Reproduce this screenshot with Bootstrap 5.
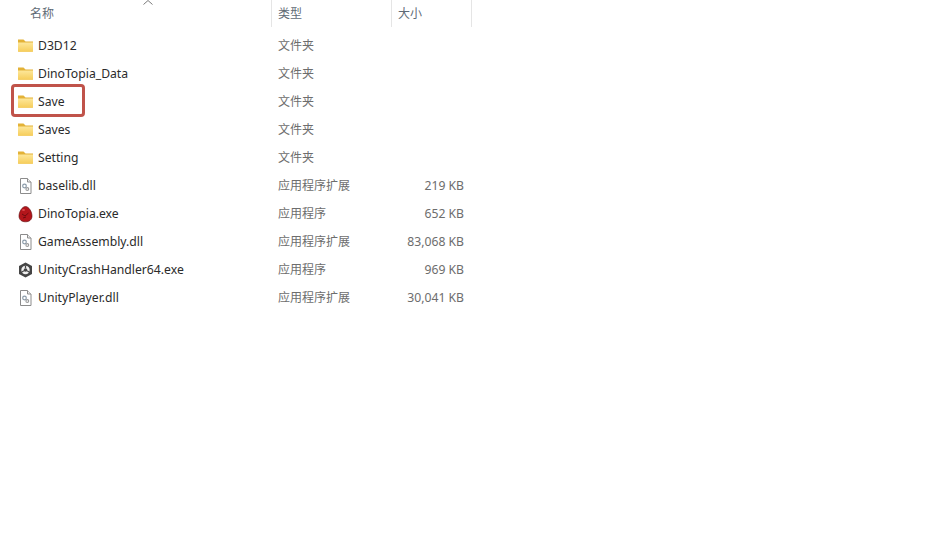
<!DOCTYPE html>
<html lang="zh">
<head>
<meta charset="utf-8">
<title>Files</title>
<link href="https://cdn.jsdelivr.net/npm/bootstrap@5.3.0/dist/css/bootstrap.min.css" rel="stylesheet">
<style>
body{background:#fff;font-family:"Noto Sans","Noto Sans CJK SC",sans-serif;font-size:12.2px;color:#2b2b2b;overflow:hidden}
.fx-list{width:472px;position:relative}
.fx-head{height:27px;color:#5f6b76;position:relative;font-size:12px}
.fx-head>div{padding-top:5px;height:27px}
.fx-c1{width:271px;flex:none}
.fx-c2{width:120px;flex:none}
.fx-c3{width:81px;flex:none}
.fx-head .fx-c1{padding-left:30px}
.fx-head .fx-c2,.fx-head .fx-c3{padding-left:6px;border-left:1px solid #e5e5e5}
.fx-head .fx-c3{border-right:1px solid #e5e5e5}
.fx-caret{position:absolute;left:143px;top:0}
.fx-body{padding-top:5px}
.fx-row{height:28px;line-height:28px}
.fx-name{padding-left:17px;gap:4px}
.fx-name svg{flex:none;width:17px;height:18px}
.fx-type{padding-left:7px;color:#6d6d6d;font-size:12px}
.fx-size{padding-right:8px;text-align:right;color:#6d6d6d}
.fx-mark{position:absolute;left:11px;top:84px;width:74px;height:33px;border:3px solid #c0534a;border-radius:4px}
</style>
</head>
<body>
<svg width="0" height="0" class="d-block">
<defs>
<linearGradient id="fg" x1="0" y1="0" x2="0" y2="1"><stop offset="0" stop-color="#fde79a"/><stop offset="1" stop-color="#f6cd5a"/></linearGradient>
<symbol id="i-folder" viewBox="0 0 17 18"><path d="M1 2.500h5.500l2 2H16v10H1z" fill="#e3b237"/><path d="M1 5.500h15V14a.7.7 0 0 1-.7.7H1.700A.7.7 0 0 1 1 14z" fill="url(#fg)"/></symbol>
<symbol id="i-dll" viewBox="0 0 17 18"><path d="M3.500 1.500h7l3.500 3.500V16.500H3.500z" fill="#fff" stroke="#8c8c8c"/><path d="M10.500 1.500v3.500H14" fill="#eee" stroke="#8c8c8c"/><circle cx="7.500" cy="9" r="1.800" fill="none" stroke="#8a9aa8" stroke-width="1.200"/><circle cx="10.300" cy="12" r="1.400" fill="none" stroke="#9a9a9a" stroke-width="1.100"/></symbol>
<symbol id="i-egg" viewBox="0 0 17 18"><path d="M8.500 1.500C12 1.500 15 7 15 11s-3 5.800-6.500 5.800S2 15 2 11 5 1.500 8.500 1.500z" fill="#b3151b" stroke="#5a0a0d" stroke-width=".6"/><path d="M5 9l3 2 3.500-3M6 13l3-1" fill="none" stroke="#6e0b0f" stroke-width="1"/><ellipse cx="6.500" cy="5" rx="1.500" ry="1" fill="#dc4a4d"/></symbol>
<symbol id="i-unity" viewBox="0 0 17 18"><path d="M8.500 1.500 15 5v8l-6.500 3.500L2 13V5z" fill="#454545"/><circle cx="8.500" cy="9" r="4.200" fill="#f0f0f0"/><circle cx="8.500" cy="9" r="1.800" fill="#454545"/><path d="M8.500 4.800v2.500M4.800 11l2.200-1.200M12.200 11 10 9.800" stroke="#454545" stroke-width="1.300" fill="none"/></symbol>
</defs>
</svg>
<div class="fx-list">
  <div class="fx-head d-flex">
    <div class="fx-c1">名称</div>
    <div class="fx-c2">类型</div>
    <div class="fx-c3">大小</div>
    <svg class="fx-caret" width="10" height="6" viewBox="0 0 10 6"><path d="M.5 4.500 5 .5l4.500 4" fill="none" stroke="#7a7a7a"/></svg>
  </div>
  <div class="fx-body">
    <div class="fx-row d-flex"><div class="fx-c1 fx-name d-flex align-items-center"><svg><use href="#i-folder"/></svg>D3D12</div><div class="fx-c2 fx-type">文件夹</div><div class="fx-c3"></div></div>
    <div class="fx-row d-flex"><div class="fx-c1 fx-name d-flex align-items-center"><svg><use href="#i-folder"/></svg>DinoTopia_Data</div><div class="fx-c2 fx-type">文件夹</div><div class="fx-c3"></div></div>
    <div class="fx-row d-flex"><div class="fx-c1 fx-name d-flex align-items-center"><svg><use href="#i-folder"/></svg>Save</div><div class="fx-c2 fx-type">文件夹</div><div class="fx-c3"></div></div>
    <div class="fx-row d-flex"><div class="fx-c1 fx-name d-flex align-items-center"><svg><use href="#i-folder"/></svg>Saves</div><div class="fx-c2 fx-type">文件夹</div><div class="fx-c3"></div></div>
    <div class="fx-row d-flex"><div class="fx-c1 fx-name d-flex align-items-center"><svg><use href="#i-folder"/></svg>Setting</div><div class="fx-c2 fx-type">文件夹</div><div class="fx-c3"></div></div>
    <div class="fx-row d-flex"><div class="fx-c1 fx-name d-flex align-items-center"><svg><use href="#i-dll"/></svg>baselib.dll</div><div class="fx-c2 fx-type">应用程序扩展</div><div class="fx-c3 fx-size">219 KB</div></div>
    <div class="fx-row d-flex"><div class="fx-c1 fx-name d-flex align-items-center"><svg><use href="#i-egg"/></svg>DinoTopia.exe</div><div class="fx-c2 fx-type">应用程序</div><div class="fx-c3 fx-size">652 KB</div></div>
    <div class="fx-row d-flex"><div class="fx-c1 fx-name d-flex align-items-center"><svg><use href="#i-dll"/></svg>GameAssembly.dll</div><div class="fx-c2 fx-type">应用程序扩展</div><div class="fx-c3 fx-size">83,068 KB</div></div>
    <div class="fx-row d-flex"><div class="fx-c1 fx-name d-flex align-items-center"><svg><use href="#i-unity"/></svg>UnityCrashHandler64.exe</div><div class="fx-c2 fx-type">应用程序</div><div class="fx-c3 fx-size">969 KB</div></div>
    <div class="fx-row d-flex"><div class="fx-c1 fx-name d-flex align-items-center"><svg><use href="#i-dll"/></svg>UnityPlayer.dll</div><div class="fx-c2 fx-type">应用程序扩展</div><div class="fx-c3 fx-size">30,041 KB</div></div>
  </div>
  <div class="fx-mark"></div>
</div>
<script src="https://cdn.jsdelivr.net/npm/bootstrap@5.3.0/dist/js/bootstrap.bundle.min.js"></script>
</body>
</html>
